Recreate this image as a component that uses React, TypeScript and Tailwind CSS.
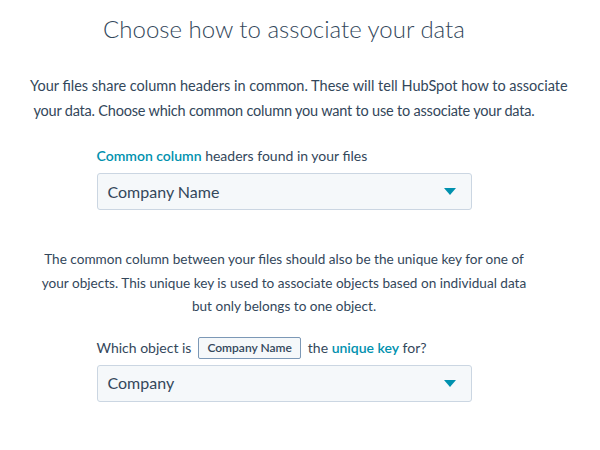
export default function App() {
  return (
    <div className="min-h-[450px] w-[600px] bg-white font-['Lato',sans-serif] text-[#33475b]">
      <div className="w-[568px]">
        <h1 className="pt-[12px] text-center text-[24px] font-light leading-[34px]">Choose how to associate your data</h1>

        <p className="mx-auto mt-[27px] w-[520px] text-center text-[14.5px] leading-[25px]">
          <span className="block whitespace-nowrap pl-[6px]">
            Your files share column headers in common. These will tell HubSpot how to associate
          </span>
          <span className="block tracking-[-0.2px]">
            your data. Choose which common column you want to use to associate your data.
          </span>
        </p>

        <div className="mx-auto mt-[22px] w-[375px]">
          <div className="text-[14px] leading-[22px]">
            <span className="font-semibold text-[#0091ae]">Common column</span> headers found in your files
          </div>
          <Select value="Company Name" className="mt-[6px]" />
        </div>

        <p className="mx-auto mt-[38px] w-[496px] text-center text-[13.6px] leading-[23.5px]">
          The common column between your files should also be the unique key for one of your objects. This unique key
          is used to associate objects based on individual data but only belongs to one object.
        </p>

        <div className="mx-auto mt-[18px] w-[375px]">
          <div className="flex items-center text-[14px] leading-[22px]">
            <span>Which object is</span>
            <span className="mx-[7px] rounded-[2px] border border-[#7c98b6] bg-[#f5f8fa] px-[8px] text-[12px] font-semibold leading-[20px]">
              Company Name
            </span>
            <span>
              the <span className="font-semibold text-[#0091ae]">unique key</span> for?
            </span>
          </div>
          <Select value="Company" className="mt-[6px]" />
        </div>
      </div>
    </div>
  );
}

function Select({ value, className }: { value: string; className?: string }) {
  return (
    <div
      className={`flex h-[37px] items-center justify-between rounded-[3px] border border-[#cbd6e2] bg-[#f5f8fa] pl-[10px] pr-[15px] ${className ?? ""}`}
    >
      <span className="text-[16px]">{value}</span>
      <svg width="12" height="7" viewBox="0 0 12 7">
        <path d="M0 0 L12 0 L6 7 Z" fill="#0091ae" />
      </svg>
    </div>
  );
}
